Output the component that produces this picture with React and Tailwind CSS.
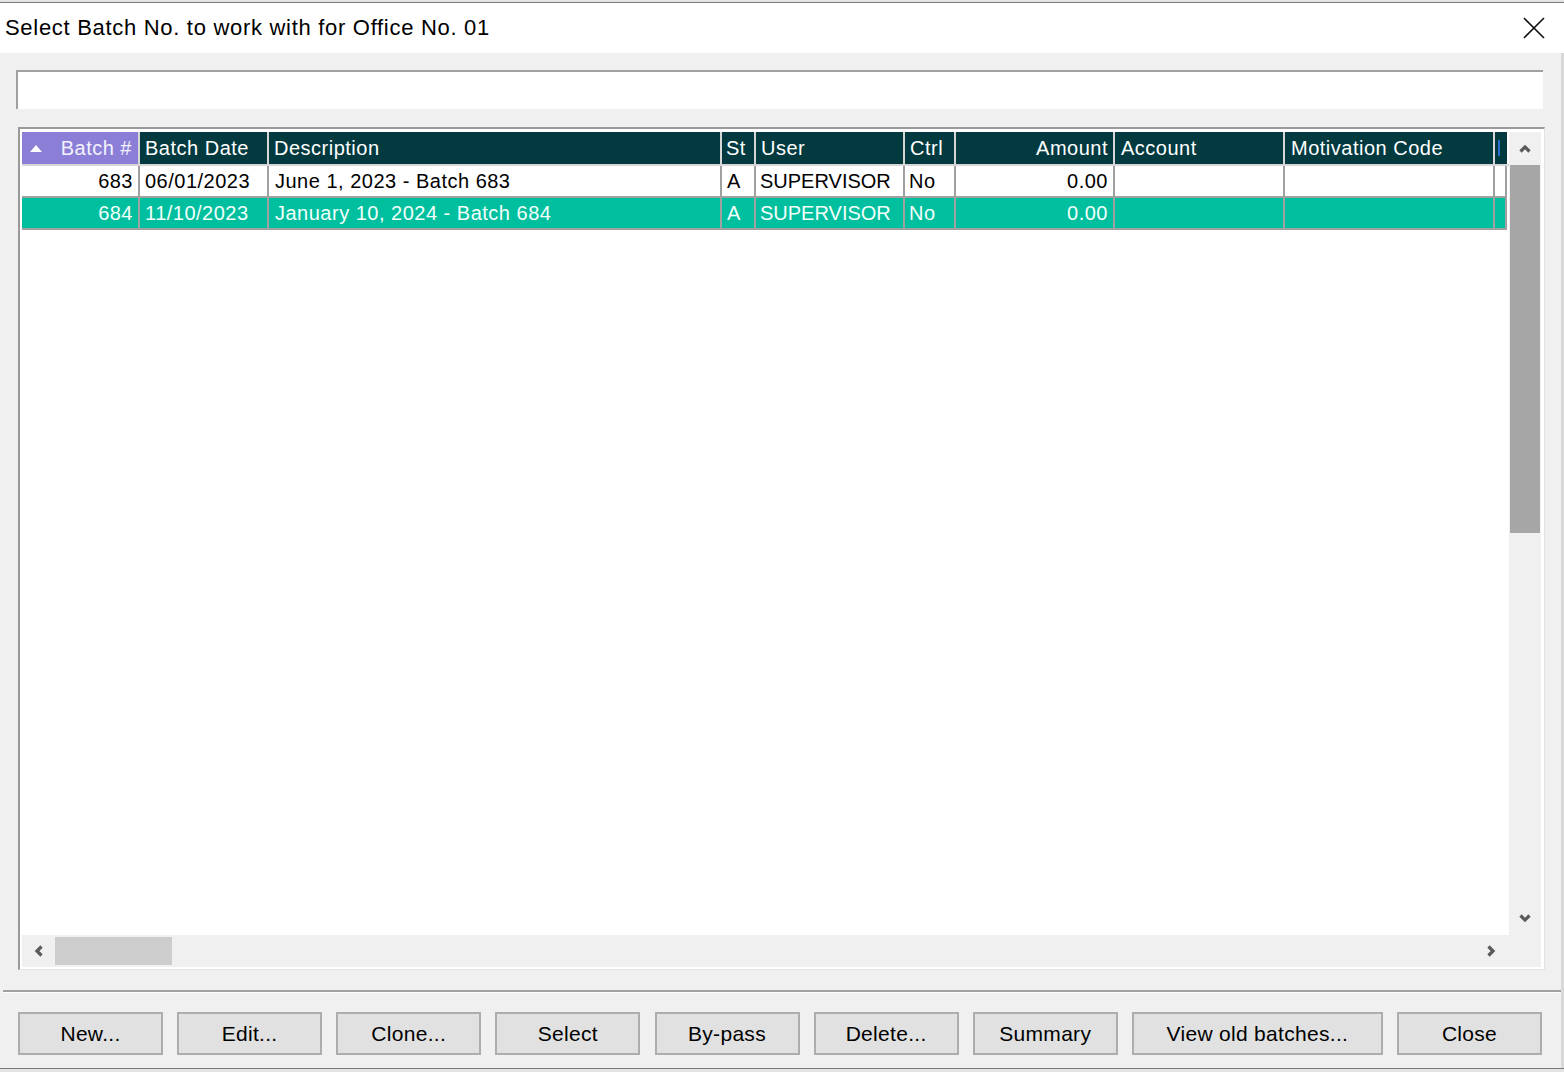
import React from 'react'

const FONT = { fontFamily: '"Liberation Sans", Arial, sans-serif' }

const rows = [
  { id: '683', date: '06/01/2023', desc: 'June 1, 2023 - Batch 683', st: 'A', user: 'SUPERVISOR', ctrl: 'No', amount: '0.00', selected: false },
  { id: '684', date: '11/10/2023', desc: 'January 10, 2024 - Batch 684', st: 'A', user: 'SUPERVISOR', ctrl: 'No', amount: '0.00', selected: true },
]

const buttons = [
  { label: 'New...', w: 'w-[145px]' },
  { label: 'Edit...', w: 'w-[145px]' },
  { label: 'Clone...', w: 'w-[145px]' },
  { label: 'Select', w: 'w-[145px]' },
  { label: 'By-pass', w: 'w-[145px]' },
  { label: 'Delete...', w: 'w-[145px]' },
  { label: 'Summary', w: 'w-[145px]' },
  { label: 'View old batches...', w: 'w-[251px]' },
  { label: 'Close', w: 'w-[145px]' },
]

function Chevron({ dir }) {
  const pts = {
    up: '2.5,9.5 7,5 11.5,9.5',
    down: '2.5,4.5 7,9 11.5,4.5',
    left: '9.5,2.5 5,7 9.5,11.5',
    right: '4.5,2.5 9,7 4.5,11.5',
  }
  return (
    <svg width="14" height="14" viewBox="0 0 14 14">
      <polyline points={pts[dir]} fill="none" stroke="#5a5a5a" strokeWidth="3.2" />
    </svg>
  )
}

function HeaderCell({ children, className }) {
  return (
    <div className={`h-full flex items-center border-r-2 border-[#d6d6d6] text-white text-[20px] leading-none tracking-[0.5px] whitespace-nowrap ${className}`}>
      {children}
    </div>
  )
}

function Cell({ children, className, sel }) {
  return (
    <div
      className={`h-full flex items-center border-r-2 border-b-2 border-[#a0a0a0] text-[20px] leading-none tracking-[0.5px] whitespace-nowrap ${
        sel ? 'bg-[#00bf9f] text-[#f2fffb]' : 'bg-white text-black'
      } ${className}`}
    >
      {children}
    </div>
  )
}

export default function App() {
  return (
    <div className="w-[1564px] h-[1072px] bg-[#f0f0f0] flex flex-col overflow-hidden" style={FONT}>
      {/* background window peeking above */}
      <div className="h-[3px] bg-[#e4e4e4] border-b border-[#7a7a7a]" />

      {/* title bar */}
      <div className="h-[50px] bg-white flex items-center justify-between pl-[5px] pr-[19px]">
        <span className="text-[22px] tracking-[0.7px] text-black pb-[2px]">Select Batch No. to work with for Office No. 01</span>
        <svg width="22" height="22" viewBox="0 0 22 22">
          <path d="M1 1 L21 21 M21 1 L1 21" stroke="#111" strokeWidth="1.6" />
        </svg>
      </div>

      <div className="h-[1015px] flex flex-col border-r-[3px] border-[#d8d8d8]">
        {/* search box */}
        <div className="mt-[17px] ml-[16px] w-[1527px] h-[39px] bg-white border-t-2 border-l-2 border-[#a0a0a0]" />

        {/* grid */}
        <div className="mt-[18px] ml-[18px] w-[1527px] h-[843px] border-t-2 border-l-2 border-[#9a9a9a] border-r border-b border-r-[#e3e3e3] border-b-[#e3e3e3] bg-white pt-[3px] pl-[2px] pr-[2px] pb-[1px]">
          <div className="flex flex-col h-full">
            <div className="flex h-[803px]">
              <div className="w-[1487px] bg-white">
                {/* header */}
                <div className="flex h-[34px] border-b-2 border-[#d6d6d6]">
                  <HeaderCell className="w-[118px] bg-[#8a7ed6] justify-between pl-[7px] pr-[6px]">
                    <svg width="14" height="10" viewBox="0 0 14 10">
                      <polygon points="1,9 7,2 13,9" fill="#fff" />
                    </svg>
                    <span className="text-[#f4f2ff]">Batch #</span>
                  </HeaderCell>
                  <HeaderCell className="w-[129px] bg-[#023a40] pl-[5px]">Batch Date</HeaderCell>
                  <HeaderCell className="w-[453px] bg-[#023a40] pl-[5px]">Description</HeaderCell>
                  <HeaderCell className="w-[34px] bg-[#023a40] pl-[4px]">St</HeaderCell>
                  <HeaderCell className="w-[149px] bg-[#023a40] pl-[5px]">User</HeaderCell>
                  <HeaderCell className="w-[51px] bg-[#023a40] pl-[5px]">Ctrl</HeaderCell>
                  <HeaderCell className="w-[159px] bg-[#023a40] justify-end pr-[5px]">Amount</HeaderCell>
                  <HeaderCell className="w-[170px] bg-[#023a40] pl-[6px]">Account</HeaderCell>
                  <HeaderCell className="w-[210px] bg-[#023a40] pl-[6px]">Motivation Code</HeaderCell>
                  <div className="w-[12px] h-full bg-[#023a40] flex items-center pl-[3px]">
                    <div className="w-[2px] h-[16px] bg-[#2a6fd0]" />
                  </div>
                </div>

                {/* rows */}
                {rows.map((r) => (
                  <div key={r.id} className="flex h-[32px]">
                    <Cell sel={r.selected} className="w-[118px] justify-end pr-[5px]">{r.id}</Cell>
                    <Cell sel={r.selected} className="w-[129px] pl-[5px]">{r.date}</Cell>
                    <Cell sel={r.selected} className="w-[453px] pl-[6px]">{r.desc}</Cell>
                    <Cell sel={r.selected} className="w-[34px] pl-[5px]">{r.st}</Cell>
                    <Cell sel={r.selected} className="w-[149px] pl-[4px] tracking-normal">{r.user}</Cell>
                    <Cell sel={r.selected} className="w-[51px] pl-[4px]">{r.ctrl}</Cell>
                    <Cell sel={r.selected} className="w-[159px] justify-end pr-[5px]">{r.amount}</Cell>
                    <Cell sel={r.selected} className="w-[170px]" />
                    <Cell sel={r.selected} className="w-[210px]" />
                    <Cell sel={r.selected} className="w-[12px] border-r-0" />
                  </div>
                ))}
              </div>

              {/* vertical scrollbar */}
              <div className="w-[32px] bg-[#f0f0f0] flex flex-col">
                <div className="h-[33px] flex items-center justify-center">
                  <Chevron dir="up" />
                </div>
                <div className="h-[368px] mx-[1px] bg-[#a6a6a6]" />
                <div className="flex-1" />
                <div className="h-[34px] flex items-center justify-center">
                  <Chevron dir="down" />
                </div>
              </div>
            </div>

            {/* horizontal scrollbar */}
            <div className="flex h-[32px]">
              <div className="w-[1487px] bg-[#f0f0f0] flex items-center">
                <div className="w-[33px] flex justify-center">
                  <Chevron dir="left" />
                </div>
                <div className="w-[117px] h-[28px] bg-[#cdcdcd]" />
                <div className="flex-1" />
                <div className="w-[36px] flex justify-center">
                  <Chevron dir="right" />
                </div>
              </div>
              <div className="w-[32px] bg-[#f0f0f0]" />
            </div>
          </div>
        </div>

        {/* separator */}
        <div className="mt-[20px] ml-[3px] w-[1558px] h-[2px] border-t-2 border-[#a0a0a0] border-b-0" />
        <div className="ml-[3px] w-[1558px] h-[1px] bg-white" />

        {/* buttons */}
        <div className="mt-[19px] ml-[18px] w-[1524px] flex justify-between">
          {buttons.map((b) => (
            <button
              key={b.label}
              className={`${b.w} h-[43px] bg-[#e1e1e1] border-2 border-[#adadad] text-[21px] tracking-[0.3px] text-black flex items-center justify-center`}
            >
              {b.label}
            </button>
          ))}
        </div>
      </div>

      <div className="h-[4px] border-t border-[#7a7a7a] bg-[#e4e4e4]" />
    </div>
  )
}
